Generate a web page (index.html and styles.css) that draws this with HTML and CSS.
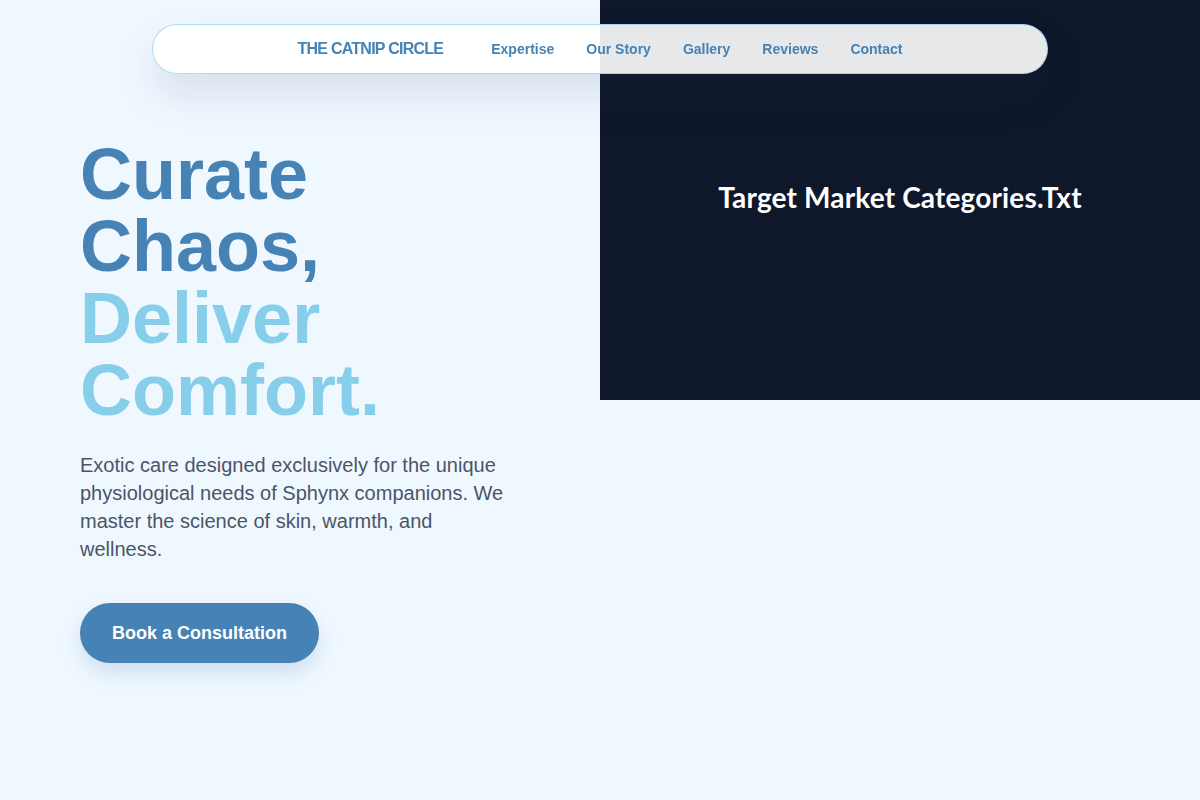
FILE: index.html
```html
<!DOCTYPE html>
<html lang="en">
<head>
<meta charset="utf-8">
<title>The Catnip Circle</title>
<link rel="stylesheet" href="styles.css">
</head>
<body>
<nav class="nav">
  <a class="logo" href="#">THE CATNIP CIRCLE</a>
  <ul class="nav-links">
    <li><a href="#">Expertise</a></li>
    <li><a href="#">Our Story</a></li>
    <li><a href="#">Gallery</a></li>
    <li><a href="#">Reviews</a></li>
    <li><a href="#">Contact</a></li>
  </ul>
</nav>
<main class="hero">
  <section class="hero-text">
    <h1 class="headline">Curate Chaos, <span class="accent">Deliver Comfort.</span></h1>
    <p class="lead">Exotic care designed exclusively for the unique physiological needs of Sphynx companions. We master the science of skin, warmth, and wellness.</p>
    <a class="cta" href="#">Book a Consultation</a>
  </section>
  <section class="hero-media">
    <h2 class="media-title">Target Market Categories.Txt</h2>
  </section>
</main>
</body>
</html>
```
FILE: styles.css
```css
* { box-sizing: border-box; }
html, body { margin: 0; padding: 0; }
body {
  background: #f0f8ff;
  font-family: "Liberation Sans", Arial, sans-serif;
  color: #4a5568;
}
.nav {
  position: fixed;
  top: 24px;
  left: 50%;
  transform: translateX(-50%);
  width: 896px;
  height: 50px;
  display: flex;
  align-items: center;
  justify-content: center;
  gap: 48px;
  background: rgba(255, 255, 255, 0.9);
  border: 1px solid rgba(135, 206, 235, 0.7);
  border-radius: 25px;
  box-shadow: 0 20px 40px rgba(30, 60, 90, 0.12);
  z-index: 10;
}
.logo {
  color: #4682b4;
  font-weight: 700;
  font-size: 16px;
  letter-spacing: -0.75px;
  text-decoration: none;
}
.nav-links {
  list-style: none;
  margin: 0;
  padding: 0;
  display: flex;
  gap: 32px;
}
.nav-links a {
  color: #4682b4;
  font-weight: 700;
  font-size: 14px;
  text-decoration: none;
}
.hero {
  display: grid;
  grid-template-columns: 1fr 1fr;
  min-height: 800px;
}
.hero-text {
  align-self: center;
  padding: 0 80px;
}
.headline {
  margin: 0;
  font-size: 72px;
  line-height: 1;
  font-weight: 700;
  color: #4682b4;
}
.accent {
  display: block;
  color: #87ceeb;
}
.lead {
  margin: 25px 0 40px;
  max-width: 430px;
  font-size: 20px;
  line-height: 28px;
  color: #4a5568;
}
.cta {
  display: inline-block;
  padding: 19px 32px;
  background: #4682b4;
  color: #fff;
  font-weight: 700;
  font-size: 18px;
  line-height: 22px;
  border-radius: 30px;
  text-decoration: none;
  box-shadow: 0 10px 20px rgba(70, 130, 180, 0.2);
}
.hero-media {
  align-self: start;
  height: 400px;
  background: #0f172a;
  display: flex;
  align-items: center;
  justify-content: center;
}
.media-title {
  margin: 0 0 6px;
  font-family: Lato, "Liberation Sans", sans-serif;
  font-weight: 700;
  font-size: 28px;
  letter-spacing: 0.15px;
  color: #fff;
}
```
